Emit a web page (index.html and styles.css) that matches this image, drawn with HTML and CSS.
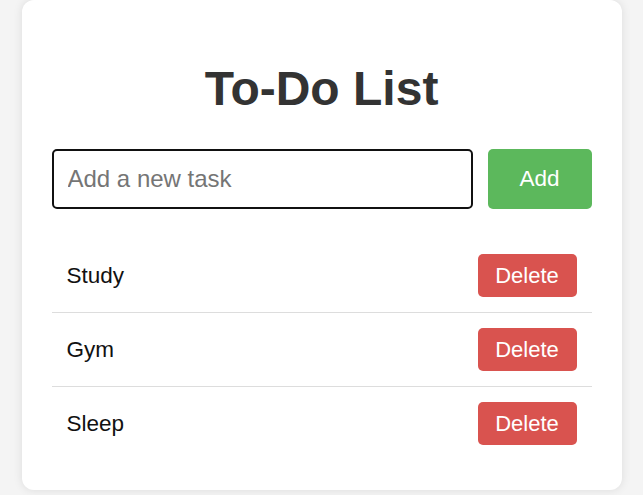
FILE: index.html
```html
<!DOCTYPE html>
<html lang="en">
<head>
<meta charset="utf-8">
<title>To-Do List</title>
<link rel="stylesheet" href="styles.css">
</head>
<body>
<div class="card">
  <h1 class="title">To-Do List</h1>
  <div class="entry">
    <input class="task-input" type="text" placeholder="Add a new task">
    <button class="btn btn-add">Add</button>
  </div>
  <ul class="tasks">
    <li class="task"><span class="task-name">Study</span><button class="btn btn-delete">Delete</button></li>
    <li class="task"><span class="task-name">Gym</span><button class="btn btn-delete">Delete</button></li>
    <li class="task"><span class="task-name">Sleep</span><button class="btn btn-delete">Delete</button></li>
  </ul>
</div>
</body>
</html>
```
FILE: styles.css
```css
html, body {
  margin: 0;
  padding: 0;
}
body {
  background: #f4f4f4;
  font-family: "Liberation Sans", Arial, sans-serif;
  height: 495px;
  overflow: hidden;
}
.card {
  box-sizing: border-box;
  width: 600px;
  height: 490px;
  margin: 0 auto;
  padding: 30px;
  background: #fff;
  border-radius: 12px;
  box-shadow: 0 0 10px rgba(0, 0, 0, 0.1);
}
.title {
  margin: 31px 0 33px;
  font-size: 48px;
  font-weight: bold;
  color: #333;
  text-align: center;
  line-height: 55px;
}
.entry {
  display: flex;
  gap: 15px;
  margin-bottom: 30px;
}
.task-input {
  flex: 1;
  box-sizing: border-box;
  height: 60px;
  padding: 0 14px;
  border: 2px solid #111;
  border-radius: 5px;
  font-family: inherit;
  font-size: 24px;
  color: #333;
  outline: none;
}
.task-input::placeholder {
  color: #757575;
}
.btn {
  border: none;
  border-radius: 5px;
  color: #fff;
  font-family: inherit;
  cursor: pointer;
}
.btn-add {
  width: 104px;
  height: 60px;
  padding: 0;
  background: #5cb85c;
  font-size: 22.5px;
}
.tasks {
  list-style: none;
  margin: 0;
  padding: 0;
}
.task {
  display: flex;
  align-items: center;
  justify-content: space-between;
  padding: 15px;
  border-bottom: 1px solid #ddd;
}
.task:last-child {
  border-bottom: none;
}
.task-name {
  font-size: 22.5px;
  color: #111;
}
.btn-delete {
  width: 99px;
  height: 43px;
  padding: 0;
  background: #d9534f;
  font-size: 22px;
}
```
